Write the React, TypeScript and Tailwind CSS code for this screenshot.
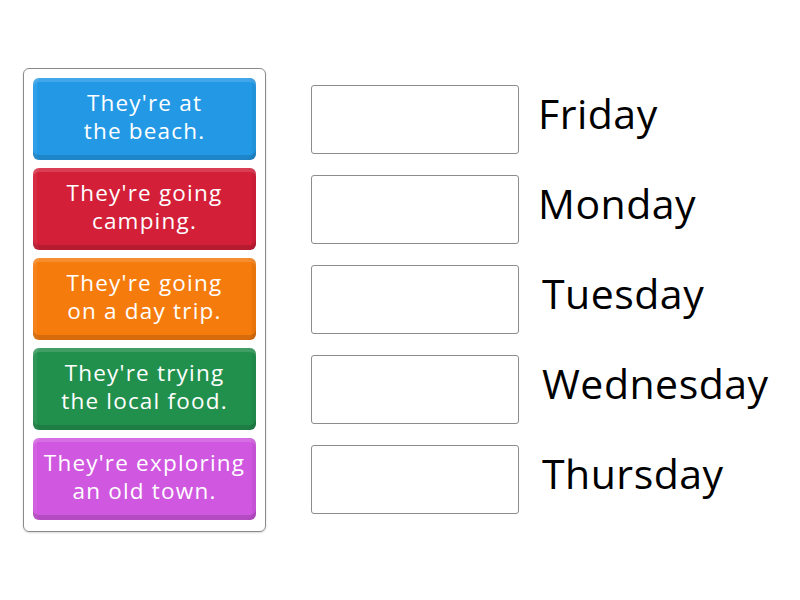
const cards = [
  { text: ["They're at", "the beach."], bg: "bg-[#2399e6]" },
  { text: ["They're going", "camping."], bg: "bg-[#d31f38]" },
  { text: ["They're going", "on a day trip."], bg: "bg-[#f57b0d]" },
  { text: ["They're trying", "the local food."], bg: "bg-[#22904d]" },
  { text: ["They're exploring", "an old town."], bg: "bg-[#d057e0]" },
];

const days = [
  { label: "Friday", offset: "ml-[19px]" },
  { label: "Monday", offset: "ml-[19px]" },
  { label: "Tuesday", offset: "ml-[23px]" },
  { label: "Wednesday", offset: "ml-[23px]" },
  { label: "Thursday", offset: "ml-[23px]" },
];

export default function App() {
  return (
    <div className="w-[800px] h-[600px] bg-white flex items-start font-['Open_Sans',sans-serif]">
      <div className="ml-[23px] mt-[68px] w-[243px] h-[464px] border border-[#8a8a8a] rounded-md px-[9px] pt-[9px] flex flex-col gap-2 shadow-[0_1px_2px_rgba(0,0,0,0.15)]">
        {cards.map((c) => (
          <div
            key={c.text[0] + c.text[1]}
            className={`${c.bg} h-[82px] rounded-md flex items-center justify-center shadow-[inset_0_-5px_0_rgba(0,0,0,0.13),inset_0_4px_0_rgba(255,255,255,0.14),inset_4px_0_0_rgba(255,255,255,0.06),inset_-4px_0_0_rgba(0,0,0,0.05)]`}
          >
            <p className="text-white text-[22.5px] leading-[28px] tracking-[1.2px] text-center whitespace-nowrap -mt-[4px]">
              {c.text[0]}
              <br />
              {c.text[1]}
            </p>
          </div>
        ))}
      </div>
      <div className="ml-[45px] mt-[85px] flex flex-col gap-[21px]">
        {days.map((d) => (
          <div key={d.label} className="flex items-center h-[69px]">
            <div className="w-[208px] h-[69px] border border-[#8c8c8c] rounded-[3px] bg-white shrink-0" />
            <span className={`${d.offset} text-[41px] tracking-[0.5px] text-black leading-none -mt-[12px]`}>{d.label}</span>
          </div>
        ))}
      </div>
    </div>
  );
}
